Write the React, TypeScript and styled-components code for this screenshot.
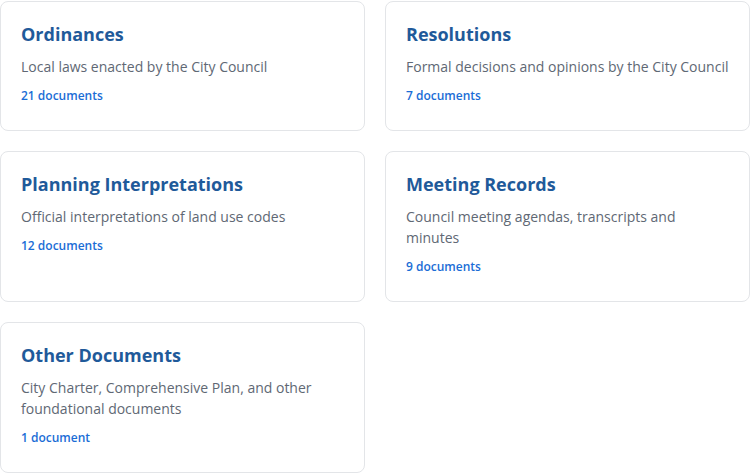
import React from "react";
import styled, { createGlobalStyle } from "styled-components";

const GlobalStyle = createGlobalStyle`
  html, body {
    margin: 0;
    padding: 0;
    background: #ffffff;
  }
  body {
    font-family: "Open Sans", "Noto Sans", sans-serif;
  }
`;

const Grid = styled.div`
  display: grid;
  grid-template-columns: 1fr 1fr;
  column-gap: 20px;
  row-gap: 20px;
  width: 750px;
  padding-top: 1px;
  box-sizing: border-box;
`;

const Card = styled.a`
  display: block;
  border: 1px solid #e3e5e8;
  border-radius: 8px;
  padding: 20px 20px 24px;
  background: #fff;
  text-decoration: none;
  box-sizing: border-box;
`;

const Title = styled.h3`
  margin: 0 0 9px;
  font-size: 18px;
  line-height: 25px;
  font-weight: 700;
  color: #1f5a9a;
`;

const Description = styled.p`
  margin: 0 0 10px;
  font-size: 14px;
  line-height: 21px;
  color: #606874;
`;

const Count = styled.span`
  display: block;
  font-size: 12px;
  line-height: 18px;
  font-weight: 600;
  color: #1a6dd6;
  margin-bottom: 1px;
`;

const categories = [
  { title: "Ordinances", desc: "Local laws enacted by the City Council", count: "21 documents" },
  { title: "Resolutions", desc: "Formal decisions and opinions by the City Council", count: "7 documents" },
  { title: "Planning Interpretations", desc: "Official interpretations of land use codes", count: "12 documents" },
  { title: "Meeting Records", desc: "Council meeting agendas, transcripts and minutes", count: "9 documents" },
  { title: "Other Documents", desc: "City Charter, Comprehensive Plan, and other foundational documents", count: "1 document" },
];

export default function App() {
  return (
    <>
      <GlobalStyle />
      <Grid>
        {categories.map((c) => (
          <Card key={c.title} href="#">
            <Title>{c.title}</Title>
            <Description>{c.desc}</Description>
            <Count>{c.count}</Count>
          </Card>
        ))}
      </Grid>
    </>
  );
}
